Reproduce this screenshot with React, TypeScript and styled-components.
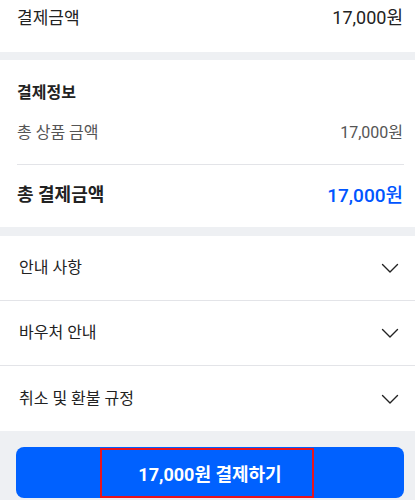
import React from "react";
import styled, { createGlobalStyle } from "styled-components";

const GlobalStyle = createGlobalStyle`
  html, body { margin: 0; padding: 0; background: #ffffff; }
  body {
    font-family: Roboto, "Noto Sans CJK KR", sans-serif;
    color: #222222;
    -webkit-font-smoothing: antialiased;
  }
  * { box-sizing: border-box; }
`;

const Page = styled.div`
  width: 415px;
  height: 500px;
  overflow: hidden;
  display: flex;
  flex-direction: column;
  background: #eef0f3;
`;

const Section = styled.section<{ $pt?: number; $pb?: number }>`
  background: #ffffff;
  padding: ${(p) => p.$pt ?? 0}px 12px ${(p) => p.$pb ?? 0}px 17px;
`;

const Gap = styled.div<{ $h: number }>`
  height: ${(p) => p.$h}px;
  flex: none;
`;

const Row = styled.div<{ $h: number }>`
  height: ${(p) => p.$h}px;
  display: flex;
  align-items: center;
  justify-content: space-between;
`;

const Label = styled.span<{ $size: number; $weight?: number; $color?: string }>`
  font-size: ${(p) => p.$size}px;
  font-weight: ${(p) => p.$weight ?? 400};
  color: ${(p) => p.$color ?? "#222222"};
  line-height: 1;
`;

const Divider = styled.div`
  height: 1px;
  background: #e3e4e8;
  margin-right: -1px;
`;

const AccordionList = styled.div`
  background: #ffffff;
  display: flex;
  flex-direction: column;
`;

const AccordionRow = styled.div<{ $last?: boolean }>`
  height: 65px;
  display: flex;
  align-items: center;
  justify-content: space-between;
  border-bottom: ${(p) => (p.$last ? "none" : "1px solid #e3e4e8")};
  padding: 0 16px 0 19px;
`;

const AccordionTitle = styled.span`
  font-size: 16px;
  color: #222222;
  line-height: 1;
`;

const Footer = styled.div`
  flex: 1;
  padding: 16px 11px 0 16px;
`;

const PayButton = styled.button`
  position: relative;
  width: 100%;
  height: 51px;
  border: none;
  border-radius: 8px;
  background: #0061ff;
  color: #ffffff;
  font-family: Roboto, "Noto Sans CJK KR", sans-serif;
  font-size: 18px;
  font-weight: 700;
  display: flex;
  align-items: center;
  justify-content: center;
  padding: 0;
`;

const Highlight = styled.span`
  position: absolute;
  left: 84px;
  top: 1px;
  width: 214px;
  height: 50px;
  border: 2px solid #e8141c;
  pointer-events: none;
`;

const Chevron = () => (
  <svg width="18" height="12" viewBox="0 0 18 12" fill="none">
    <path d="M1.5 2.5 L9 10 L16.5 2.5" stroke="#222222" strokeWidth="1.4" strokeLinecap="round" strokeLinejoin="round" />
  </svg>
);

export default function App() {
  return (
    <>
      <GlobalStyle />
      <Page>
        <Section $pb={16}>
          <Row $h={36}>
            <Label $size={17}>결제금액</Label>
            <Label $size={18}>17,000원</Label>
          </Row>
        </Section>
        <Gap $h={8} />
        <Section $pt={20} $pb={2}>
          <Row $h={26}>
            <Label $size={16} $weight={700}>결제정보</Label>
          </Row>
          <Gap $h={14} />
          <Row $h={26}>
            <Label $size={16} $color="#555555">총 상품 금액</Label>
            <Label $size={16} $color="#555555">17,000원</Label>
          </Row>
          <Gap $h={18} />
          <Divider />
          <Row $h={60}>
            <Label $size={18} $weight={700}>총 결제금액</Label>
            <Label $size={19} $weight={500} $color="#0055ff">17,000원</Label>
          </Row>
        </Section>
        <Gap $h={9} />
        <AccordionList>
          <AccordionRow>
            <AccordionTitle>안내 사항</AccordionTitle>
            <Chevron />
          </AccordionRow>
          <AccordionRow>
            <AccordionTitle>바우처 안내</AccordionTitle>
            <Chevron />
          </AccordionRow>
          <AccordionRow $last>
            <AccordionTitle>취소 및 환불 규정</AccordionTitle>
            <Chevron />
          </AccordionRow>
        </AccordionList>
        <Footer>
          <PayButton>
            17,000원 결제하기
            <Highlight />
          </PayButton>
        </Footer>
      </Page>
    </>
  );
}
